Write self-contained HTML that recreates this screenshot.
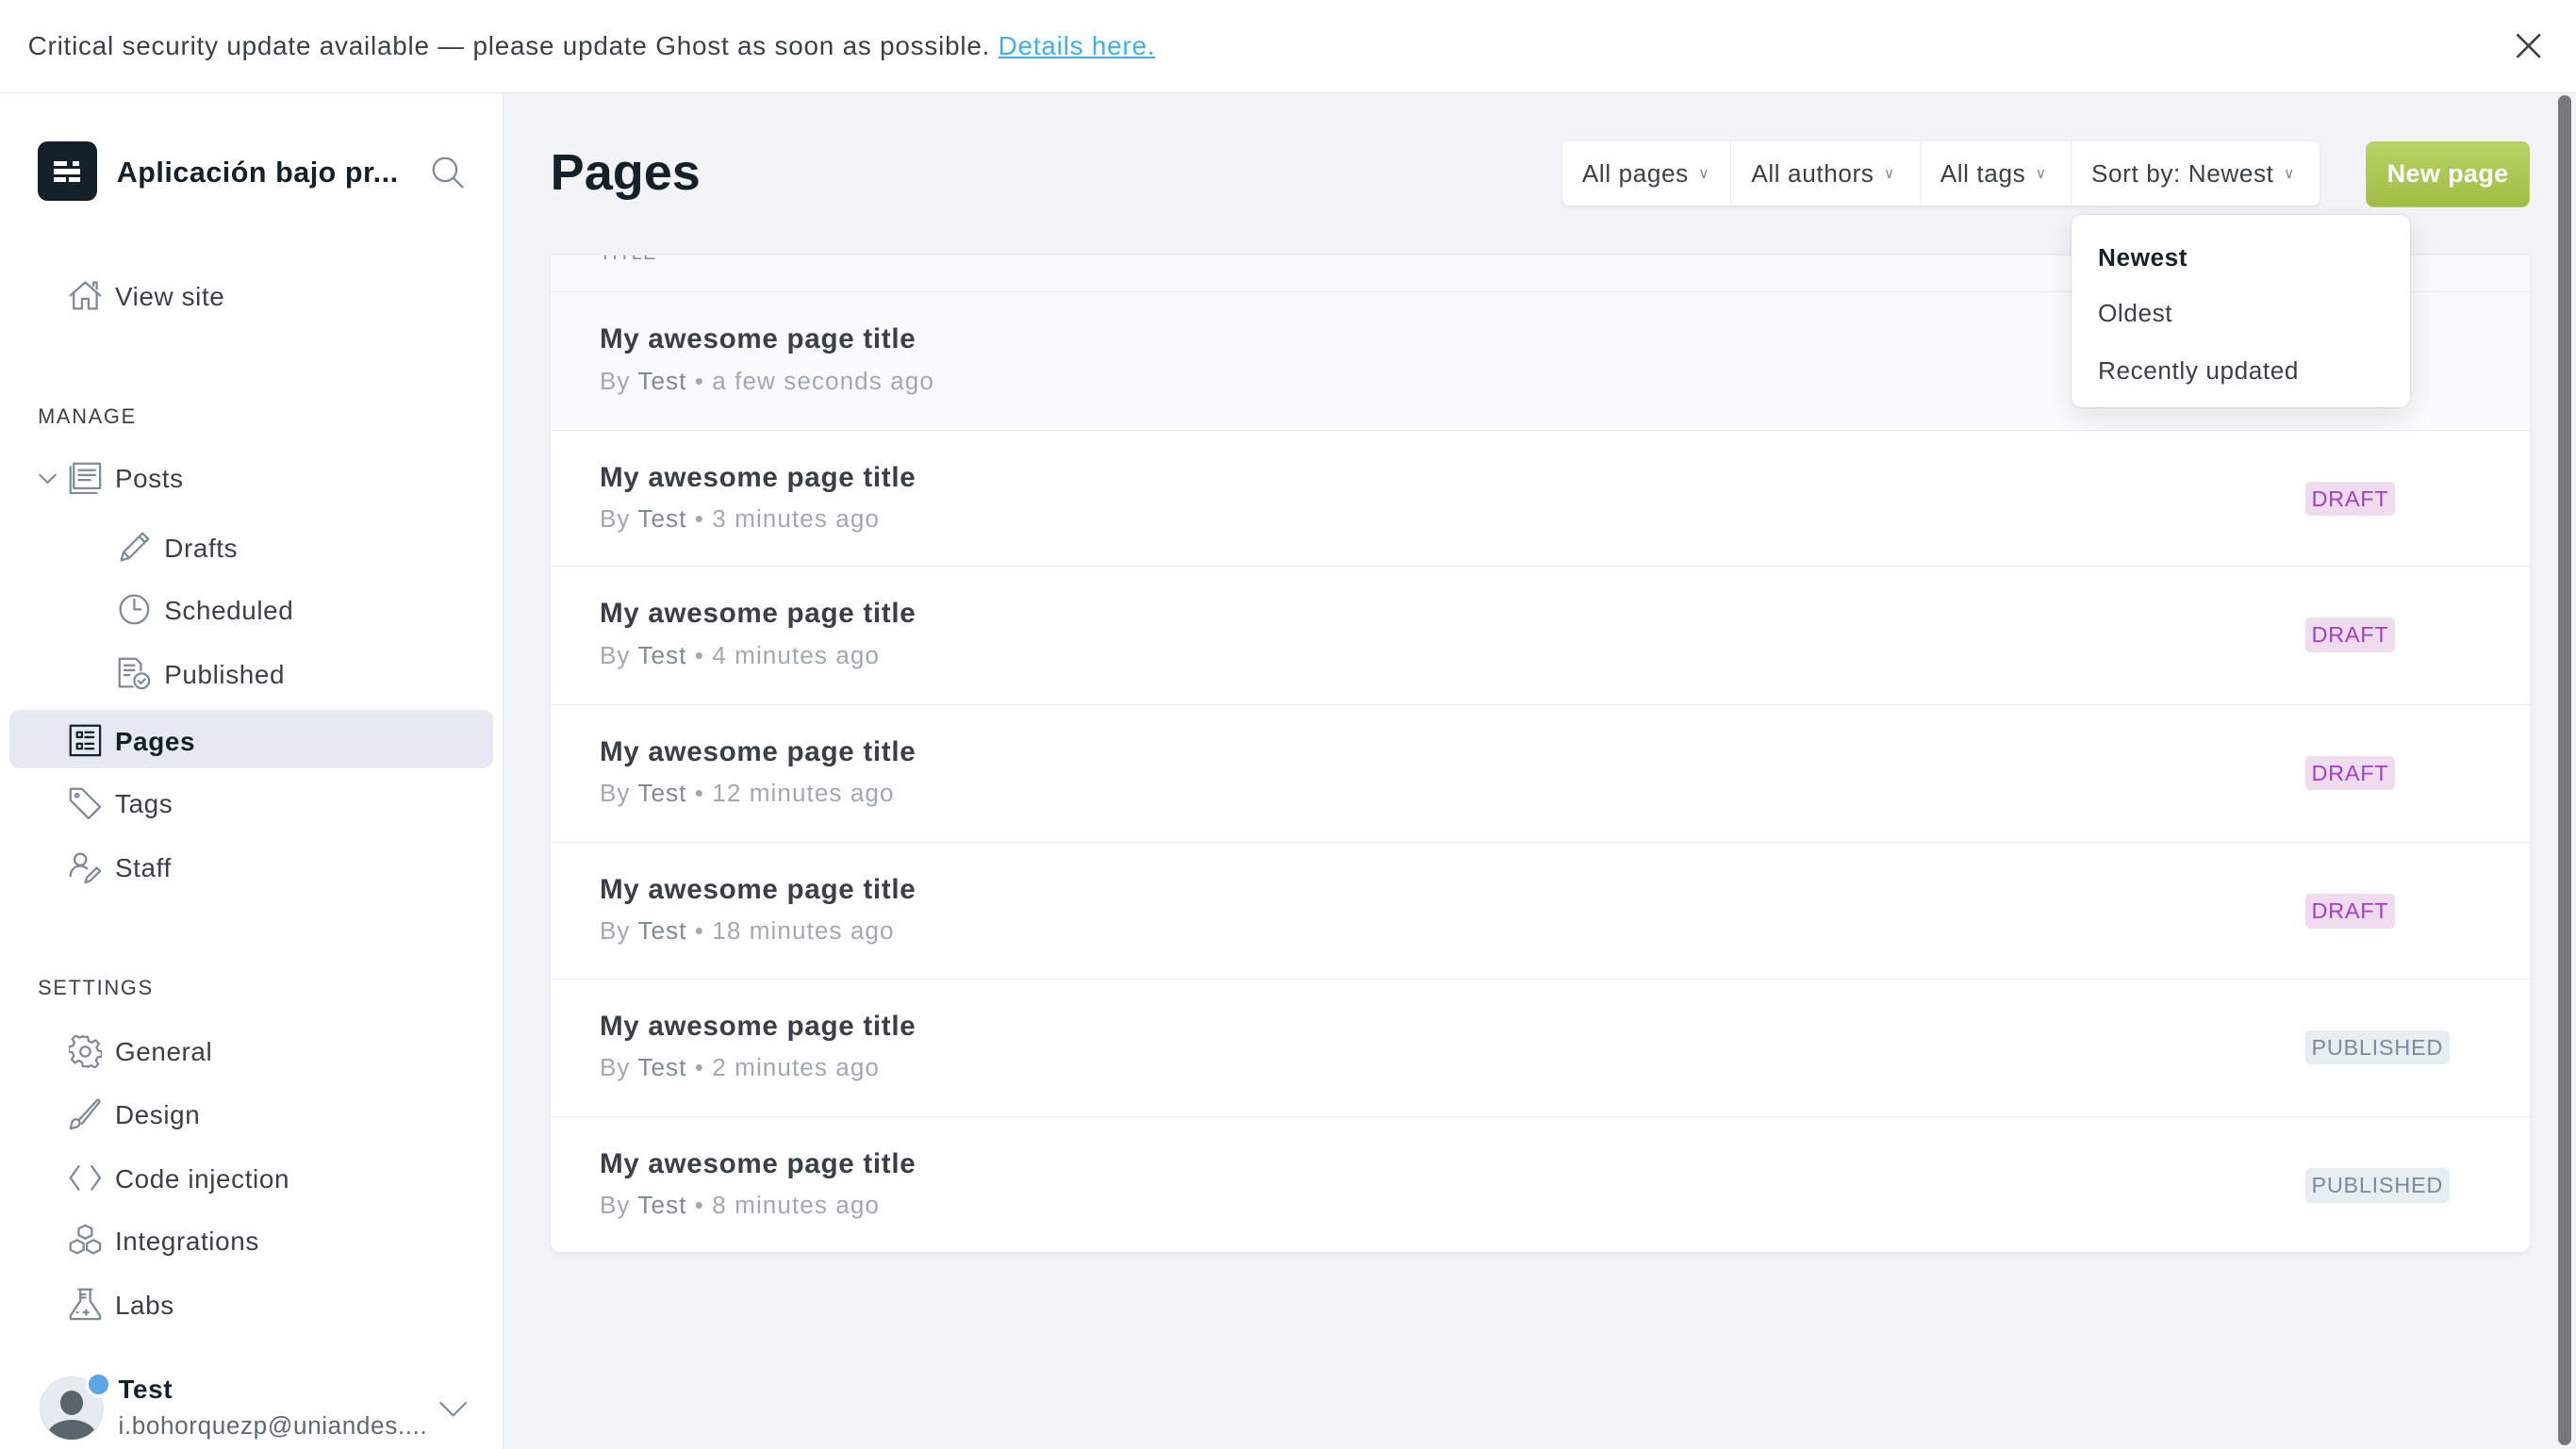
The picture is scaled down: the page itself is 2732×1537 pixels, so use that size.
<!DOCTYPE html>
<html><head><meta charset="utf-8"><style>
html,body{margin:0;padding:0;}
body{width:1568px;height:882px;overflow:hidden;zoom:1.74235;font-family:"Liberation Sans",sans-serif;color:#394047;background:#f1f3f6;position:relative;letter-spacing:.35px;}
.abs{position:absolute;}
.banner{left:0;top:0;width:1568px;height:56px;background:#fff;border-bottom:1px solid #e2e4e6;}
.banner .t{left:17px;top:19px;font-size:16px;white-space:nowrap;letter-spacing:.45px;}
.banner a{color:#3eb0ef;text-decoration:underline;}
.side{left:0;top:57px;width:306px;height:825px;background:#fff;border-right:1px solid #e6e8eb;}
.nav{position:absolute;font-size:16px;color:#394047;white-space:nowrap;line-height:20px;margin-top:1px;}
.ic{position:absolute;width:20px;height:20px;}
.ic svg{width:20px;height:20px;fill:none;stroke:#7d8b95;stroke-width:1.3;stroke-linecap:round;stroke-linejoin:round;}
.sec{position:absolute;left:23px;font-size:12.5px;letter-spacing:1px;color:#394047;font-weight:500;}
.row{position:absolute;left:0;width:1205px;height:83px;border-top:1px solid #e6ebf0;}
.row .ti{position:absolute;left:30px;top:19px;font-size:17px;font-weight:bold;color:#394047;letter-spacing:.4px;}
.row .me{position:absolute;left:30px;top:45px;font-size:15px;color:#a0a9b2;letter-spacing:.6px;}
.row .me b{color:#7d8b95;font-weight:normal;}
.badge{position:absolute;left:1068px;top:31px;height:21px;line-height:21px;padding:0 4px;border-radius:3px;font-size:13.5px;letter-spacing:.4px;}
.dr{background:#f0dcef;color:#a13ec9;}
.pu{background:#e6edf3;color:#7d8b95;}
.seg{position:absolute;top:0;height:39px;line-height:40px;font-size:15px;color:#394047;border-right:1px solid #eceef0;box-sizing:border-box;padding-left:12px;white-space:nowrap;}
.seg i{font-style:normal;font-size:9px;color:#7d8b95;margin-left:6px;vertical-align:2px;}
</style></head><body>
<div class="abs banner"><div class="abs t">Critical security update available — please update Ghost as soon as possible. <a>Details here.</a></div>
<svg class="abs" style="left:1530px;top:19px" width="18" height="18" viewBox="0 0 18 18"><path d="M2 2L16 16M16 2L2 16" stroke="#394047" stroke-width="1.5"/></svg></div>

<div class="abs side">
<div class="abs" style="left:23px;top:29px;width:36px;height:36px;background:#15212a;border-radius:6px"></div>
<div class="abs" style="left:33px;top:41px;width:8px;height:3px;background:#fff"></div>
<div class="abs" style="left:44px;top:41px;width:4px;height:3px;background:#fff"></div>
<div class="abs" style="left:33px;top:46px;width:16px;height:3px;background:#fff"></div>
<div class="abs" style="left:33px;top:51px;width:7px;height:3px;background:#fff"></div>
<div class="abs" style="left:42px;top:51px;width:7px;height:3px;background:#fff"></div>
<div class="abs" style="left:71px;top:38px;font-size:17.5px;font-weight:bold;color:#15212a;letter-spacing:.3px">Aplicación bajo pr...</div>
<svg class="abs" style="left:263px;top:38px" width="20" height="20" viewBox="0 0 20 20"><circle cx="8" cy="8" r="7" fill="none" stroke="#7d8b95" stroke-width="1.3"/><path d="M13 13l6 6" stroke="#7d8b95" stroke-width="1.3"/></svg>

<div class="ic" style="left:42px;top:113px"><svg viewBox="0 0 20 20"><path d="M1 10L10 2l9 8M3 8v10h5v-6h4v6h5V8M15 4V2h2v4"/></svg></div>
<div class="nav" style="left:70px;top:113px">View site</div>

<div class="sec" style="top:189px">MANAGE</div>
<svg class="abs" style="left:23px;top:229px" width="12" height="10" viewBox="0 0 12 10"><path d="M1 3l5 5 5-5" fill="none" stroke="#7d8b95" stroke-width="1.2"/></svg>
<div class="ic" style="left:42px;top:224px"><svg viewBox="0 0 20 20"><rect x="3" y="1" width="16" height="15"/><path d="M1 3v16h16M6 5h10M6 8h10M6 11h7"/></svg></div>
<div class="nav" style="left:70px;top:224px">Posts</div>
<div class="ic" style="left:72px;top:266px"><svg viewBox="0 0 20 20"><path d="M2 18l1.5-5L15 1.5l3.5 3.5L7 16.5zM3.5 13l3.5 3.5M13 3.5l3.5 3.5"/></svg></div>
<div class="nav" style="left:100px;top:266px">Drafts</div>
<div class="ic" style="left:72px;top:304px"><svg viewBox="0 0 20 20"><circle cx="10" cy="10" r="8.5"/><path d="M10 4v6h4"/></svg></div>
<div class="nav" style="left:100px;top:304px">Scheduled</div>
<div class="ic" style="left:72px;top:343px"><svg viewBox="0 0 20 20"><path d="M9 18H1V1h10l3 3v4M4 5h6M4 8h6M4 11h3"/><circle cx="14.5" cy="14.5" r="4.5"/><path d="M12.5 14.5l1.5 1.5 2.5-2.5"/></svg></div>
<div class="nav" style="left:100px;top:343px">Published</div>
<div class="abs" style="left:6px;top:375px;width:294px;height:36px;background:#e6e9f2;border-radius:6px"></div>
<div class="ic" style="left:42px;top:384px"><svg viewBox="0 0 20 20" style="stroke:#15212a"><rect x="1" y="1" width="18" height="18"/><rect x="5" y="5" width="3" height="3"/><rect x="5" y="12" width="3" height="3"/><path d="M10 5h5M10 8h5M10 12h5M10 15h5"/></svg></div>
<div class="nav" style="left:70px;top:384px;font-weight:bold;color:#15212a">Pages</div>
<div class="ic" style="left:42px;top:422px"><svg viewBox="0 0 20 20"><path d="M1 1h7l11 11-7 7L1 8z"/><circle cx="5" cy="5" r="1"/></svg></div>
<div class="nav" style="left:70px;top:422px">Tags</div>
<div class="ic" style="left:42px;top:461px"><svg viewBox="0 0 20 20"><circle cx="7" cy="5" r="3.5"/><path d="M1 15c0-4 3-6 6-6 2 0 3 .5 4 1.5M10 19l1-3 6-6 2 2-6 6z"/></svg></div>
<div class="nav" style="left:70px;top:461px">Staff</div>

<div class="sec" style="top:537px">SETTINGS</div>
<div class="ic" style="left:42px;top:573px"><svg viewBox="0 0 20 20"><circle cx="10" cy="10" r="3"/><path d="M8.5 1h3l.5 2.5 2 1 2.2-1.4 2.1 2.1L16.9 7.5l1 2 2.1.5v3l-2.5.5-1 2 1.4 2.2-2.1 2.1-2.2-1.4-2 1L11.5 19h-3l-.5-2.5-2-1-2.2 1.4-2.1-2.1L3.1 12.5l-1-2L0 10V7l2.5-.5 1-2L2.1 2.3 4.2.2 6.5 1.6l2-1z"/></svg></div>
<div class="nav" style="left:70px;top:573px">General</div>
<div class="ic" style="left:42px;top:611px"><svg viewBox="0 0 20 20"><path d="M1 19l1-4c1-2 3-2 4-1s1 3-1 4zM6 14L17 2c1-1 2 0 1.5 1L8 16"/></svg></div>
<div class="nav" style="left:70px;top:611px">Design</div>
<div class="ic" style="left:42px;top:650px"><svg viewBox="0 0 20 20"><path d="M6 3L1 10l5 7M14 3l5 7-5 7"/></svg></div>
<div class="nav" style="left:70px;top:650px">Code injection</div>
<div class="ic" style="left:42px;top:688px"><svg viewBox="0 0 20 20"><path d="M10 1l4 2v4l-4 2-4-2V3zM5 10l4 2v4l-4 2-4-2v-4zM15 10l4 2v4l-4 2-4-2v-4z"/></svg></div>
<div class="nav" style="left:70px;top:688px">Integrations</div>
<div class="ic" style="left:42px;top:727px"><svg viewBox="0 0 20 20"><path d="M7 1v7L1 17v2h18v-2L13 8V1M6 1h8M7 4h3M7 6h3M5 15h.5M9 15h3M10.5 13.5v3"/></svg></div>
<div class="nav" style="left:70px;top:727px">Labs</div>

<div class="abs" style="left:24px;top:781px;width:38px;height:38px;border-radius:50%;background:#e6ebf2;overflow:hidden;border:1px solid #dde3ea">
<div class="abs" style="left:12px;top:8px;width:14px;height:15px;border-radius:50%;background:#5a646b"></div>
<div class="abs" style="left:4px;top:26px;width:30px;height:20px;border-radius:50%;background:#5a646b"></div></div>
<div class="abs" style="left:52px;top:778px;width:12px;height:12px;border-radius:50%;background:#5ba4e5;border:2px solid #fff"></div>
<div class="abs" style="left:72px;top:780px;font-size:16px;font-weight:bold;color:#15212a">Test</div>
<div class="abs" style="left:72px;top:802px;font-size:15px;color:#5d6870">i.bohorquezp@uniandes....</div>
<svg class="abs" style="left:267px;top:795px" width="18" height="12" viewBox="0 0 18 12"><path d="M1 2l8 8 8-8" fill="none" stroke="#7d8b95" stroke-width="1.2"/></svg>
</div>

<div class="abs" style="left:335px;top:87px;font-size:31px;font-weight:bold;color:#15212a;letter-spacing:0">Pages</div>
<div class="abs" style="left:951px;top:86px;width:461px;height:39px;background:#fff;border-radius:4px;box-shadow:0 1px 2px rgba(0,0,0,.08)">
<div class="seg" style="left:0;width:103px">All pages<i>∨</i></div>
<div class="seg" style="left:103px;width:115px">All authors<i>∨</i></div>
<div class="seg" style="left:218px;width:92px">All tags<i>∨</i></div>
<div class="seg" style="left:310px;width:151px;border:none">Sort by: Newest<i>∨</i></div>
</div>
<div class="abs" style="left:1440px;top:86px;width:100px;height:40px;border-radius:5px;background:linear-gradient(#b9d265,#a1bd45);border:1px solid #b5cf62;box-sizing:border-box;color:#fff;font-weight:bold;font-size:15.5px;text-align:center;line-height:39px;letter-spacing:.2px">New page</div>

<div class="abs" style="left:335px;top:155px;width:1205px;height:607px;background:#fff;border-radius:0 0 6px 6px;box-shadow:0 1px 3px rgba(0,0,0,.06);overflow:hidden;border-top:1px solid #e6ebf0;box-sizing:border-box">
<div class="abs" style="left:0;top:0;width:1205px;height:22px;background:#f9fafb"></div>
<div class="abs" style="left:30px;top:-7px;font-size:11px;color:#7d8b95;letter-spacing:1px">TITLE</div>
<div class="row" style="top:22px;background:#f9fafb"><div class="ti">My awesome page title</div><div class="me">By <b>Test</b> • a few seconds ago</div></div>
<div class="row" style="top:106px"><div class="ti">My awesome page title</div><div class="me">By <b>Test</b> • 3 minutes ago</div><div class="badge dr">DRAFT</div></div>
<div class="row" style="top:189px"><div class="ti">My awesome page title</div><div class="me">By <b>Test</b> • 4 minutes ago</div><div class="badge dr">DRAFT</div></div>
<div class="row" style="top:273px"><div class="ti">My awesome page title</div><div class="me">By <b>Test</b> • 12 minutes ago</div><div class="badge dr">DRAFT</div></div>
<div class="row" style="top:357px"><div class="ti">My awesome page title</div><div class="me">By <b>Test</b> • 18 minutes ago</div><div class="badge dr">DRAFT</div></div>
<div class="row" style="top:440px"><div class="ti">My awesome page title</div><div class="me">By <b>Test</b> • 2 minutes ago</div><div class="badge pu">PUBLISHED</div></div>
<div class="row" style="top:524px"><div class="ti">My awesome page title</div><div class="me">By <b>Test</b> • 8 minutes ago</div><div class="badge pu">PUBLISHED</div></div>
</div>

<div class="abs" style="left:1261px;top:131px;width:206px;height:117px;background:#fff;border-radius:6px;box-shadow:0 0 1px rgba(0,0,0,.2),0 6px 16px rgba(0,0,0,.1)">
<div class="abs" style="left:16px;top:17px;font-size:15px;font-weight:bold;color:#15212a">Newest</div>
<div class="abs" style="left:16px;top:51px;font-size:15px">Oldest</div>
<div class="abs" style="left:16px;top:86px;font-size:15px">Recently updated</div>
</div>

<div class="abs" style="left:1557px;top:58px;width:8px;height:822px;background:#77787a;border-radius:4px"></div>
</body></html>
